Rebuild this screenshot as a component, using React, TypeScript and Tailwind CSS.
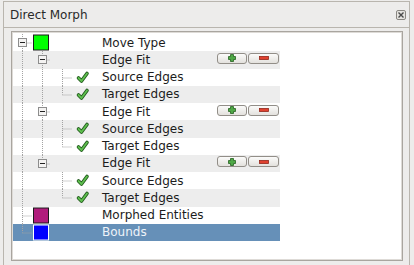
import React from 'react';

type Row = {
  label: string;
  level: number;
  icon: 'swatch' | 'check' | 'none';
  color?: string;
  expander?: boolean;
  last?: boolean;
  guides: number[];
  buttons?: boolean;
  selected?: boolean;
};

const rows: Row[] = [
  { label: 'Move Type', level: 0, icon: 'swatch', color: '#00ff00', expander: true, guides: [] },
  { label: 'Edge Fit', level: 1, icon: 'none', expander: true, guides: [0], buttons: true },
  { label: 'Source Edges', level: 2, icon: 'check', guides: [0, 1] },
  { label: 'Target Edges', level: 2, icon: 'check', last: true, guides: [0, 1] },
  { label: 'Edge Fit', level: 1, icon: 'none', expander: true, guides: [0], buttons: true },
  { label: 'Source Edges', level: 2, icon: 'check', guides: [0, 1] },
  { label: 'Target Edges', level: 2, icon: 'check', last: true, guides: [0, 1] },
  { label: 'Edge Fit', level: 1, icon: 'none', expander: true, last: true, guides: [0], buttons: true },
  { label: 'Source Edges', level: 2, icon: 'check', guides: [0] },
  { label: 'Target Edges', level: 2, icon: 'check', last: true, guides: [0] },
  { label: 'Morphed Entities', level: 0, icon: 'swatch', color: '#b01c7c', guides: [] },
  { label: 'Bounds', level: 0, icon: 'swatch', color: '#0000ff', last: true, guides: [], selected: true },
];

const H = 17.25;
const MID = 8.5;
const lineX = (l: number) => 9.5 + 20 * l;

function TreeLines({ row }: { row: Row }) {
  const x = lineX(row.level);
  const dots = { stroke: '#a3a3a3', strokeWidth: 1, strokeDasharray: '1 1' };
  const hEnd = row.icon === 'none' ? x + 8 : 20 + 20 * row.level - 1;
  return (
    <svg width={89} height={H} className="shrink-0">
      {row.guides.map((g) => (
        <line key={g} x1={lineX(g)} y1={0} x2={lineX(g)} y2={H} {...dots} />
      ))}
      <line x1={x} y1={0} x2={x} y2={row.last ? MID : H} {...dots} />
      <line x1={x} y1={MID + 0.5} x2={hEnd} y2={MID + 0.5} {...dots} />
      {row.expander && (
        <g>
          <rect x={x - 4} y={4.5} width={8} height={8} fill="#f4f3f2" stroke="#8d8d8d" />
          <line x1={x - 2.5} y1={8.5} x2={x + 2.5} y2={8.5} stroke="#222" />
        </g>
      )}
      {row.icon === 'swatch' && (
        <rect
          x={20.5 + 20 * row.level}
          y={1}
          width={15}
          height={15}
          fill={row.color}
          stroke={row.selected ? '#ffffff' : '#1a1a1a'}
        />
      )}
      {row.icon === 'check' && (
        <g transform="translate(64 2.5)">
          <path d="M1.5 6.5 L4.5 9.5 L10 2" fill="none" stroke="#235b1e" strokeWidth={3.6} strokeLinecap="round" strokeLinejoin="round" />
          <path d="M1.5 6.5 L4.5 9.5 L10 2" fill="none" stroke="#5fc04f" strokeWidth={1.8} strokeLinecap="round" strokeLinejoin="round" />
        </g>
      )}
    </svg>
  );
}

function SmallButton({ kind }: { kind: 'add' | 'remove' }) {
  return (
    <div
      className={`${kind === 'add' ? 'w-[30px]' : 'w-[31px]'} h-[11px] rounded-[3px] border border-[#928e88] bg-gradient-to-b from-[#fbfbfa] to-[#e3e1dd] flex items-center justify-center`}
    >
      {kind === 'add' ? (
        <svg width={8} height={8} viewBox="0 0 8 8">
          <path d="M2.5 0.5h3v2h2v3h-2v2h-3v-2h-2v-3h2z" fill="#4ea845" stroke="#245f20" strokeWidth={0.8} />
        </svg>
      ) : (
        <svg width={10} height={4} viewBox="0 0 10 4">
          <rect x={0.5} y={0.5} width={9} height={3} fill="#e0412f" stroke="#92261a" strokeWidth={0.8} />
        </svg>
      )}
    </div>
  );
}

export default function App() {
  return (
    <div className="w-[414px] h-[265px] bg-[#edeceb] font-['DejaVu_Sans',sans-serif] text-[12px] text-[#1c1c1c] overflow-hidden">
      <div className="ml-[3px] mt-[1px] w-[407px] h-[264px] border-x border-t border-[#b9b5ae] flex flex-col">
        <div className="h-[26px] border-b border-[#b9b5ae] flex items-center pl-[6px] pr-[3px]">
          <span className="text-[#2a2a2a]">Direct Morph</span>
          <div className="ml-auto w-[10px] h-[10px] rounded-[2px] border border-[#8a8782] bg-[#e6e4e0] flex items-center justify-center">
            <svg width={6} height={6} viewBox="0 0 6 6">
              <path d="M0.5 0.5L5.5 5.5M5.5 0.5L0.5 5.5" stroke="#4a4a4a" strokeWidth={1.4} />
            </svg>
          </div>
        </div>
        <div className="pl-[7px] pr-[6px] pt-[3px]">
          <div className="h-[230px] border border-[#a9a59f]">
            <div className="h-full border border-[#dedbd7] bg-white pt-[1px]">
              <div className="w-[267px]">
                {rows.map((row, i) => (
                  <div
                    key={i}
                    className={`h-[17.25px] flex items-center ${
                      row.selected ? 'bg-[#6690b8] text-[#eef3f8]' : i % 2 === 1 ? 'bg-[#ededed]' : 'bg-white'
                    }`}
                  >
                    <TreeLines row={row} />
                    <span className="whitespace-nowrap leading-none">{row.label}</span>
                    {row.buttons && (
                      <div className="ml-auto mr-[1px] flex gap-[1px] self-start mt-[1.5px]">
                        <SmallButton kind="add" />
                        <SmallButton kind="remove" />
                      </div>
                    )}
                  </div>
                ))}
              </div>
            </div>
          </div>
        </div>
      </div>
    </div>
  );
}
